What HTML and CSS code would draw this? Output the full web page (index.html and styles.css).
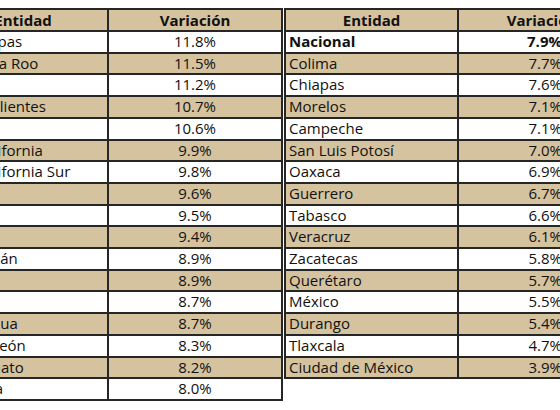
FILE: index.html
```html
<!DOCTYPE html>
<html lang="es">
<head>
    <meta charset="UTF-8">
    <meta name="viewport" content="width=device-width, initial-scale=1.0">
    <title>Inflación por entidad</title>
    <link rel="stylesheet" href="styles.css">
</head>
<body>
    <div class="tablas">
        <table class="tabla izquierda">
            <thead>
                <tr><th class="col-entidad">Entidad</th><th class="col-var">Variación</th></tr>
            </thead>
            <tbody>
                <tr class="claro"><td>Tamaulipas</td><td class="valor">11.8%</td></tr>
                <tr class="oscuro"><td>Quintana Roo</td><td class="valor">11.5%</td></tr>
                <tr class="claro"><td>Sonora</td><td class="valor">11.2%</td></tr>
                <tr class="oscuro"><td>Aguascalientes</td><td class="valor">10.7%</td></tr>
                <tr class="claro"><td>Yucatán</td><td class="valor">10.6%</td></tr>
                <tr class="oscuro"><td>Baja California</td><td class="valor">9.9%</td></tr>
                <tr class="claro"><td>Baja California Sur</td><td class="valor">9.8%</td></tr>
                <tr class="oscuro"><td>Sinaloa</td><td class="valor">9.6%</td></tr>
                <tr class="claro"><td>Jalisco</td><td class="valor">9.5%</td></tr>
                <tr class="oscuro"><td>Nayarit</td><td class="valor">9.4%</td></tr>
                <tr class="claro"><td>Michoacán</td><td class="valor">8.9%</td></tr>
                <tr class="oscuro"><td>Puebla</td><td class="valor">8.9%</td></tr>
                <tr class="claro"><td>Hidalgo</td><td class="valor">8.7%</td></tr>
                <tr class="oscuro"><td>Chihuahua</td><td class="valor">8.7%</td></tr>
                <tr class="claro"><td>Nuevo León</td><td class="valor">8.3%</td></tr>
                <tr class="oscuro"><td>Guanajuato</td><td class="valor">8.2%</td></tr>
                <tr class="claro"><td>Coahuila</td><td class="valor">8.0%</td></tr>
            </tbody>
        </table>

        <table class="tabla derecha">
            <thead>
                <tr><th class="col-entidad">Entidad</th><th class="col-var">Variación</th></tr>
            </thead>
            <tbody>
                <tr class="claro total"><td>Nacional</td><td class="valor">7.9%</td></tr>
                <tr class="oscuro"><td>Colima</td><td class="valor">7.7%</td></tr>
                <tr class="claro"><td>Chiapas</td><td class="valor">7.6%</td></tr>
                <tr class="oscuro"><td>Morelos</td><td class="valor">7.1%</td></tr>
                <tr class="claro"><td>Campeche</td><td class="valor">7.1%</td></tr>
                <tr class="oscuro"><td>San Luis Potosí</td><td class="valor">7.0%</td></tr>
                <tr class="claro"><td>Oaxaca</td><td class="valor">6.9%</td></tr>
                <tr class="oscuro"><td>Guerrero</td><td class="valor">6.7%</td></tr>
                <tr class="claro"><td>Tabasco</td><td class="valor">6.6%</td></tr>
                <tr class="oscuro"><td>Veracruz</td><td class="valor">6.1%</td></tr>
                <tr class="claro"><td>Zacatecas</td><td class="valor">5.8%</td></tr>
                <tr class="oscuro"><td>Querétaro</td><td class="valor">5.7%</td></tr>
                <tr class="claro"><td>México</td><td class="valor">5.5%</td></tr>
                <tr class="oscuro"><td>Durango</td><td class="valor">5.4%</td></tr>
                <tr class="claro"><td>Tlaxcala</td><td class="valor">4.7%</td></tr>
                <tr class="oscuro"><td>Ciudad de México</td><td class="valor">3.9%</td></tr>
            </tbody>
        </table>
    </div>
</body>
</html>
```

FILE: styles.css
```css
html, body {
    margin: 0;
    padding: 0;
    background-color: #ffffff;
    overflow: hidden;
}
body {
    font-family: "Open Sans", "Noto Sans", sans-serif;
    font-size: 15px;
    color: #111;
}
.tablas {
    display: flex;
    align-items: flex-start;
    gap: 1px;
    margin-top: 8px;
    margin-left: -63px;
    width: 760px;
}
.tabla {
    border-collapse: collapse;
    table-layout: fixed;
    flex: none;
}
.tabla th,
.tabla td {
    border: 2px solid #262626;
    padding: 0 3px;
    line-height: 19.7px;
    height: 19.7px;
    white-space: nowrap;
    overflow: hidden;
}
.tabla th {
    background-color: #d5c29f;
    font-weight: 700;
    text-align: center;
    line-height: 20px;
    height: 20px;
}
.izquierda {
    width: 346px;
}
.izquierda .col-entidad {
    width: 162px;
}
.izquierda .valor {
    text-align: center;
}
.derecha {
    width: 343px;
}
.derecha .col-entidad {
    width: 165px;
}
.derecha .valor {
    text-align: right;
    padding-right: 63px;
}
.claro td {
    background-color: #ffffff;
}
.oscuro td {
    background-color: #d5c29f;
}
.total td {
    font-weight: 700;
}
```
